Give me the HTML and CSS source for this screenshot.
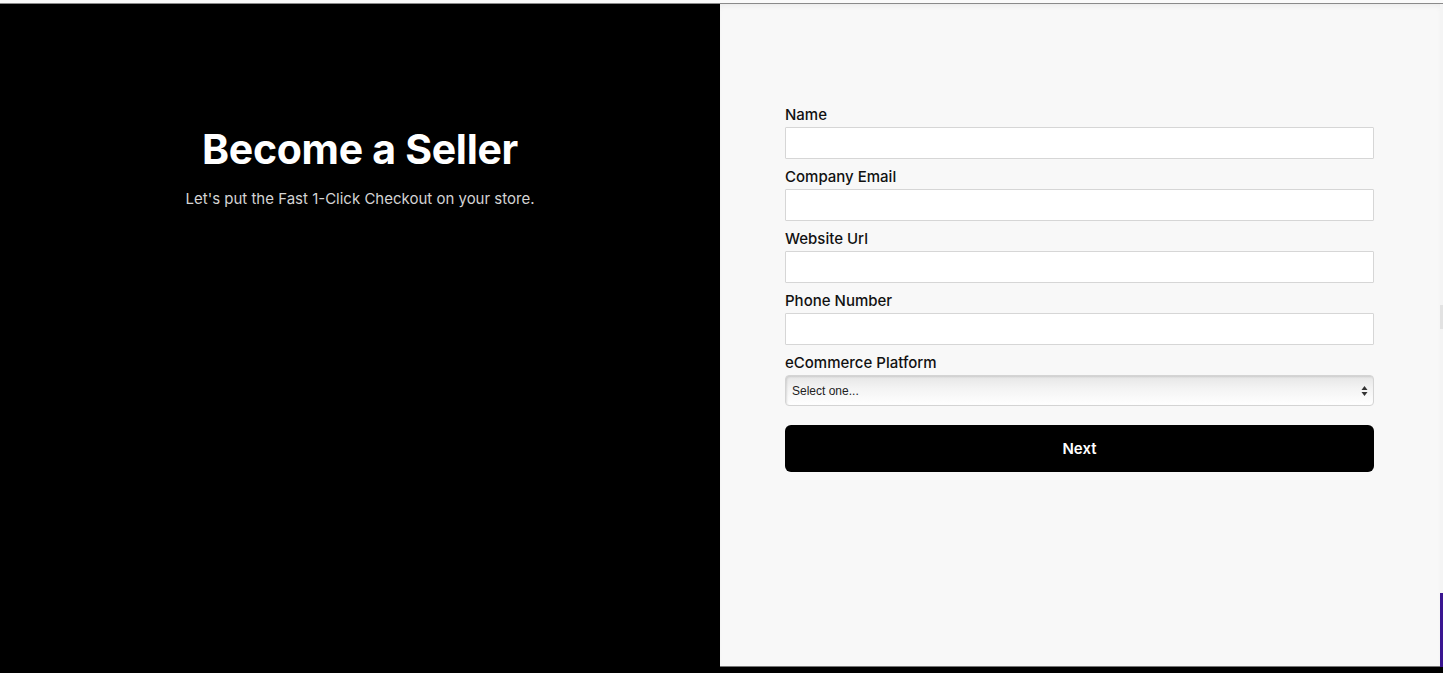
FILE: index.html
```html
<!DOCTYPE html>
<html lang="en">
<head>
    <meta charset="UTF-8">
    <meta name="viewport" content="width=device-width, initial-scale=1.0">
    <title>Become a Seller</title>
    <link rel="stylesheet" href="styles.css">
</head>
<body>
    <div class="top-strip"></div>

    <div class="page">
        <!-- Intro -->
        <div class="intro">
            <h1>Become a Seller</h1>
            <p>Let's put the Fast 1-Click Checkout on your store.</p>
        </div>

        <!-- Seller Form -->
        <div class="form-panel">
            <form id="sellerForm" class="seller-form">
                <label for="name">Name</label>
                <input type="text" id="name">

                <label for="email">Company Email</label>
                <input type="email" id="email">

                <label for="website">Website Url</label>
                <input type="text" id="website">

                <label for="phone">Phone Number</label>
                <input type="text" id="phone">

                <label for="platform">eCommerce Platform</label>
                <div class="select-wrap">
                    <select id="platform">
                        <option>Select one...</option>
                        <option>Shopify</option>
                        <option>WooCommerce</option>
                        <option>BigCommerce</option>
                        <option>Other</option>
                    </select>
                    <svg class="select-arrows" width="7" height="12" viewBox="0 0 7 12">
                        <path d="M3.5 1 L6.5 5 H0.5 Z" fill="#333"/>
                        <path d="M3.5 11 L6.5 7 H0.5 Z" fill="#333"/>
                    </svg>
                </div>

                <button type="submit">Next</button>
            </form>
        </div>

        <div class="edge">
            <div class="edge-thumb"></div>
            <div class="edge-purple"></div>
        </div>
    </div>
</body>
</html>
```

FILE: styles.css
```css
body {
    margin: 0;
    padding: 0;
    background-color: #000;
    font-family: Inter, "Noto Sans", sans-serif;
    color: #111;
    height: 673px;
    overflow: hidden;
}
.top-strip {
    height: 3px;
    background: #fafafa;
    border-bottom: 1px solid #8a8a8a;
    margin-bottom: -1px;
    position: relative;
    z-index: 1;
}
.page {
    display: flex;
    height: 664px;
}
.intro {
    width: 720px;
    background: #000;
    color: #fff;
    text-align: center;
    padding-top: 121px;
}
.intro h1 {
    margin: 0;
    font-size: 41px;
    line-height: 50px;
    font-weight: 700;
    letter-spacing: -0.3px;
}
.intro p {
    margin: 14px 0 0;
    font-size: 15px;
    line-height: 22px;
    color: #d4d4d4;
}
.form-panel {
    width: 720px;
    background: #f8f8f8;
    box-shadow: inset 0 5px 6px -3px rgba(0, 0, 0, 0.07);
    border-bottom: 1px solid #777;
    padding: 102px 66px 0 65px;
    box-sizing: border-box;
}
.seller-form label {
    display: block;
    font-size: 15px;
    line-height: 20px;
    font-weight: 500;
    color: #111;
    margin-bottom: 2px;
}
.seller-form input {
    display: block;
    width: 100%;
    height: 32px;
    box-sizing: border-box;
    margin: 0 0 8px;
    border: 1px solid #d6d6d6;
    border-radius: 1px;
    background: #fff;
}
.select-wrap {
    position: relative;
    margin-bottom: 19px;
}
.select-wrap select {
    display: block;
    width: 100%;
    height: 31px;
    appearance: none;
    -webkit-appearance: none;
    border: 1px solid #d4d4d4;
    border-radius: 4px;
    background: linear-gradient(#e6e6e6, #f4f4f4 45%, #fff);
    box-shadow: inset 1px 1px 2px rgba(0, 0, 0, 0.12);
    font-family: "Liberation Sans", Arial, sans-serif;
    font-size: 12px;
    color: #222;
    padding: 0 6px;
}
.select-arrows {
    position: absolute;
    right: 6px;
    top: 10px;
    pointer-events: none;
}
.seller-form button {
    display: block;
    width: 100%;
    height: 47px;
    border: none;
    border-radius: 6px;
    background: #000;
    color: #fff;
    font-family: Inter, "Noto Sans", sans-serif;
    font-size: 15px;
    font-weight: 600;
    cursor: pointer;
}
.edge {
    width: 3px;
    background: #f4f4f4;
    display: flex;
    flex-direction: column;
    justify-content: space-between;
    padding-top: 302px;
}
.edge-thumb {
    height: 24px;
    background: #e2e2e2;
}
.edge-purple {
    height: 74px;
    background: #3a1590;
}
```
